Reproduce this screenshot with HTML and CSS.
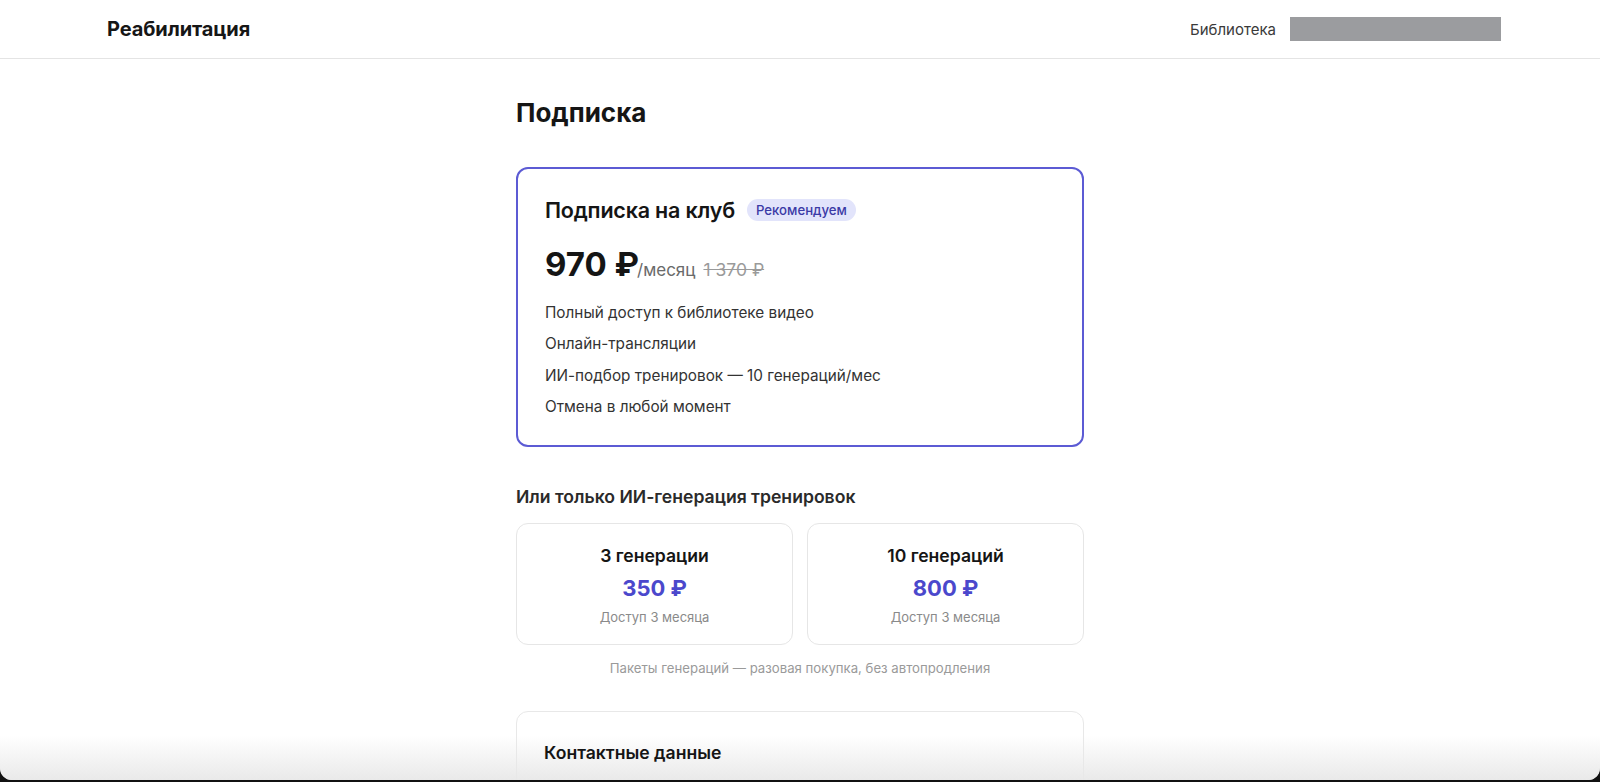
FILE: index.html
```html
<!DOCTYPE html>
<html lang="ru">
  <head>
    <meta charset="UTF-8" />
    <title>Подписка</title>
    <link rel="stylesheet" href="styles.css">
  </head>

  <body>
    <div class="window">
      <header class="topBar">
        <div class="topBarInner">
          <div class="logo">Реабилитация</div>
          <nav class="topNav">
            <a href="javascript:;" class="navLink">Библиотека</a>
            <div class="userBlur"></div>
          </nav>
        </div>
      </header>

      <main class="page">
        <h1 class="pageTitle">Подписка</h1>

        <div class="planCard">
          <div class="planHead">
            <div class="planName">Подписка на клуб</div>
            <span class="badge">Рекомендуем</span>
          </div>
          <div class="planPrice">
            <span class="priceMain">970 ₽</span><span class="pricePer">/месяц</span>
            <span class="priceOld">1 370 ₽</span>
          </div>
          <ul class="planList">
            <li>Полный доступ к библиотеке видео</li>
            <li>Онлайн-трансляции</li>
            <li>ИИ-подбор тренировок — 10 генераций/мес</li>
            <li>Отмена в любой момент</li>
          </ul>
        </div>

        <h2 class="subTitle">Или только ИИ-генерация тренировок</h2>
        <div class="packs">
          <div class="packCard">
            <div class="packName">3 генерации</div>
            <div class="packPrice">350 ₽</div>
            <div class="packNote">Доступ 3 месяца</div>
          </div>
          <div class="packCard">
            <div class="packName">10 генераций</div>
            <div class="packPrice">800 ₽</div>
            <div class="packNote">Доступ 3 месяца</div>
          </div>
        </div>
        <div class="packsHint">Пакеты генераций — разовая покупка, без автопродления</div>

        <div class="contactCard">
          <div class="contactTitle">Контактные данные</div>
        </div>
      </main>
      <div class="bottomFade"></div>
    </div>
  </body>
</html>
```

FILE: styles.css
```css
html,
body {
  margin: 0;
  padding: 0;
  height: 100%;
  overflow: hidden;
}

body {
  background: #111111;
  font-family: Inter, 'Noto Sans', sans-serif;
  color: #1a1a1a;
}

ul,
li {
  margin: 0;
  padding: 0;
  list-style: none;
}

.window {
  position: relative;
  height: 780px;
  background: #ffffff;
  border-radius: 0 0 12px 12px;
  overflow: hidden;
}

/* шапка */
.topBar {
  height: 58px;
  border-bottom: 1px solid #e4e4e4;
}

.topBarInner {
  display: flex;
  align-items: center;
  justify-content: space-between;
  height: 100%;
  padding: 0 99px 0 107px;
}

.logo {
  font-size: 20px;
  font-weight: 700;
  letter-spacing: -0.1px;
  color: #161616;
}

.topNav {
  display: flex;
  align-items: center;
  gap: 14px;
}

.navLink {
  font-size: 15px;
  color: #3a3a3a;
  text-decoration: none;
}

.userBlur {
  width: 211px;
  height: 24px;
  background: #9b9c9f;
}

/* контент */
.page {
  position: relative;
  z-index: 1;
  width: 568px;
  margin: 0 auto;
  padding-top: 38px;
}

.pageTitle {
  margin: 0 0 38px;
  font-size: 26px;
  font-weight: 700;
  line-height: 32px;
  color: #151515;
}

.planCard {
  border: 2px solid #5c5bd4;
  border-radius: 12px;
  padding: 27px 27px 23px;
}

.planHead {
  display: flex;
  align-items: center;
  gap: 12px;
}

.planName {
  font-size: 21.5px;
  font-weight: 600;
  line-height: 28px;
  letter-spacing: -0.2px;
  color: #151515;
}

.badge {
  padding: 2px 9px;
  border-radius: 11px;
  background: #e2e4fb;
  color: #3b3aa6;
  font-size: 13.2px;
  font-weight: 500;
  line-height: 18px;
}

.planPrice {
  display: flex;
  align-items: baseline;
  margin-top: 20px;
}

.priceMain {
  font-size: 33px;
  font-weight: 700;
  line-height: 40px;
  color: #151515;
}

.pricePer {
  margin-left: -2px;
  font-size: 17px;
  color: #6a6a6a;
}

.priceOld {
  margin-left: 8px;
  font-size: 17.5px;
  color: #9a9a9a;
  text-decoration: line-through;
}

.planList {
  margin-top: 13px;
}

.planList li {
  font-size: 15.3px;
  line-height: 31.3px;
  color: #333333;
}

.subTitle {
  margin: 39px 0 15px;
  font-size: 17.6px;
  font-weight: 600;
  line-height: 22px;
  color: #2a2a2a;
}

.packs {
  display: grid;
  grid-template-columns: 1fr 1fr;
  gap: 14px;
}

.packCard {
  display: flex;
  flex-direction: column;
  align-items: center;
  height: 122px;
  box-sizing: border-box;
  padding-top: 20px;
  border: 1px solid #e6e6e6;
  border-radius: 12px;
}

.packName {
  font-size: 17.6px;
  font-weight: 600;
  line-height: 24px;
  color: #151515;
}

.packPrice {
  margin-top: 6px;
  font-size: 22px;
  font-weight: 700;
  line-height: 28px;
  color: #4b48cc;
}

.packNote {
  margin-top: 6px;
  font-size: 13px;
  line-height: 18px;
  color: #8a8a8a;
}

.packsHint {
  margin-top: 14px;
  text-align: center;
  font-size: 13.2px;
  line-height: 18px;
  color: #9a9a9a;
}

.contactCard {
  margin-top: 34px;
  height: 120px;
  padding: 29px 27px 0;
  border: 1px solid #e8e8e8;
  border-radius: 12px;
}

.contactTitle {
  font-size: 17.6px;
  font-weight: 600;
  line-height: 24px;
  color: #151515;
}

/* тень у нижнего края окна */
.bottomFade {
  position: absolute;
  left: 0;
  right: 0;
  bottom: 0;
  height: 44px;
  background: linear-gradient(rgba(240, 240, 240, 0), rgba(232, 232, 232, 0.95));
  pointer-events: none;
}
```
